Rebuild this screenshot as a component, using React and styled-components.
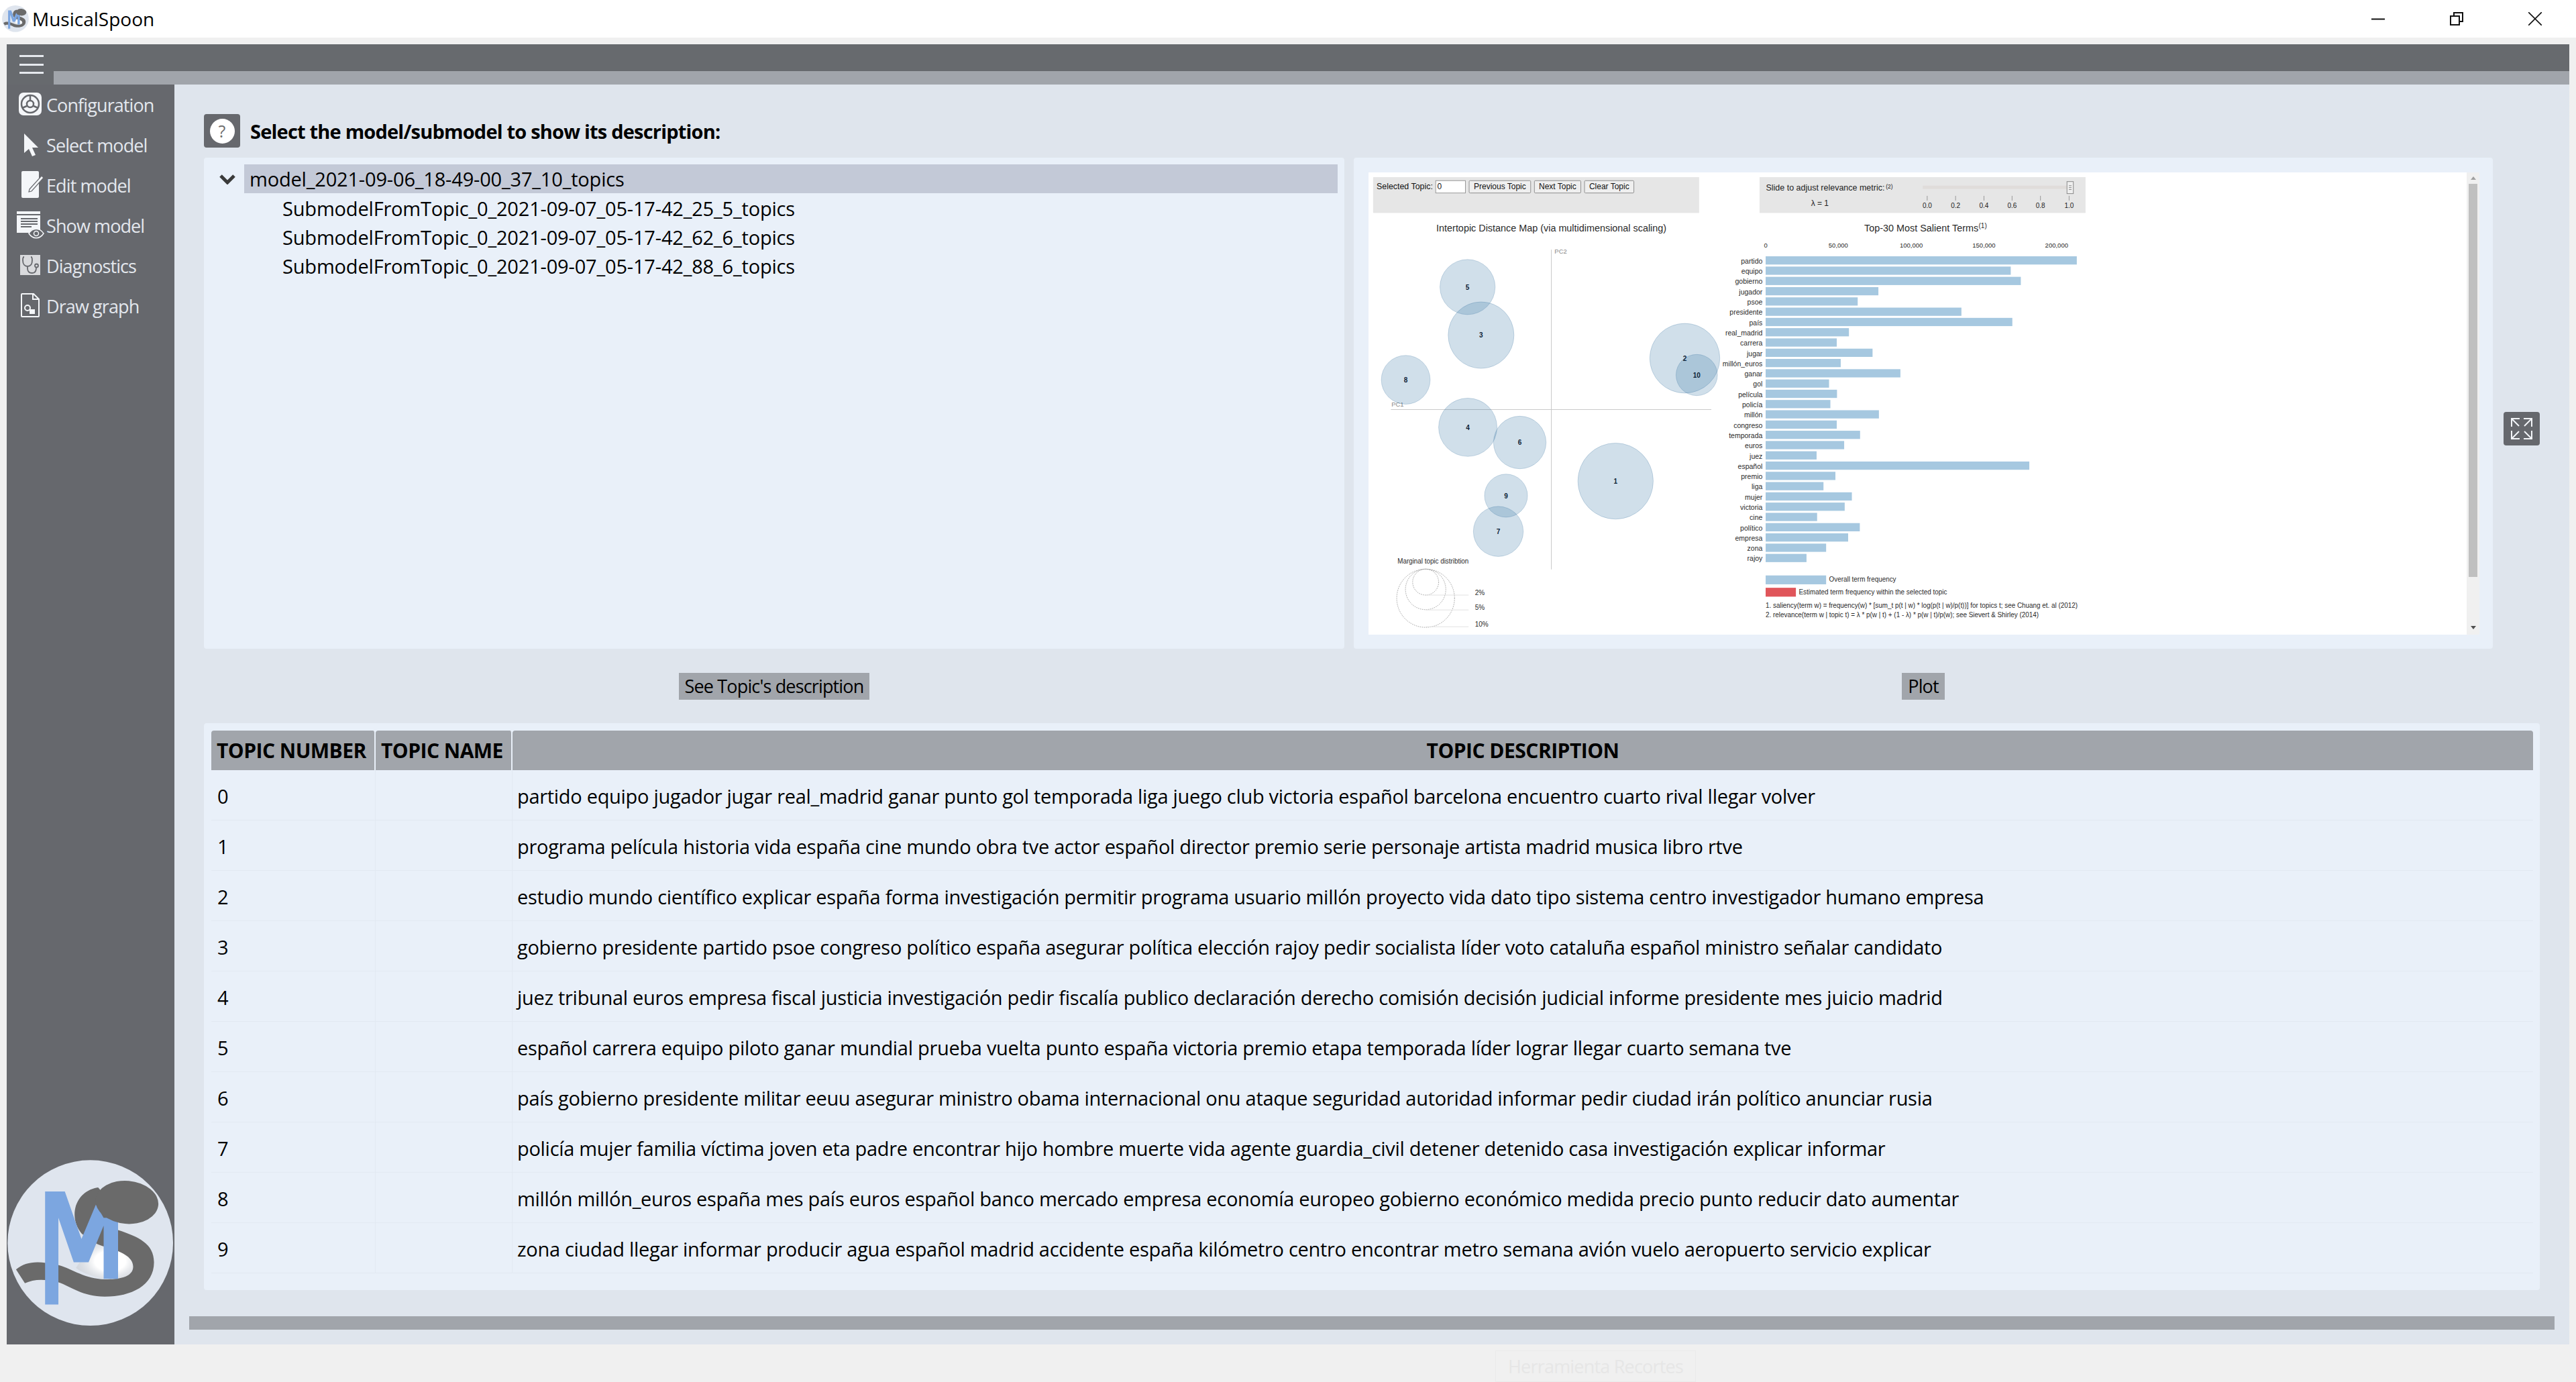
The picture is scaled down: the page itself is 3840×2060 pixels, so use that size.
import React from 'react';
import styled, { createGlobalStyle } from 'styled-components';

const UI = `"Open Sans", "Noto Sans", "Liberation Sans", sans-serif`;

const Global = createGlobalStyle`
  html, body { margin: 0; padding: 0; background: #f0f0f0; }
  * { box-sizing: border-box; }
  body { font-family: ${UI}; color: #000; }
`;

const Page = styled.div`width: 3840px; height: 2060px; display: flex; flex-direction: column; overflow: hidden; background: #f0f0f0;`;
const TitleBar = styled.header`height: 56px; background: #fff; display: flex; align-items: center; padding-left: 3px; flex: none;`;
const TitleText = styled.span`font-size: 28px; margin-left: 5px;`;
const WinControls = styled.div`margin-left: auto; display: flex; margin-right: 51px; gap: 97px;`;
const Shell = styled.div`margin: 10px 10px 0; width: 3820px; height: 1938px; display: flex; flex-direction: column; flex: none;`;
const TopBar = styled.div`height: 60px; background: #676a6e; display: flex; flex: none;`;
const MenuButton = styled.div`width: 70px; padding: 16px 0 0 19px; display: flex; flex-direction: column; gap: 9.5px;`;
const MenuLine = styled.span`display: block; width: 36px; height: 3px; background: #e6e9ee;`;
const TopStrip = styled.div`flex: 1; height: 20px; margin-top: 40px; background: #a1a5ab;`;
const Body = styled.div`flex: 1; display: flex; min-height: 0;`;
const Sidebar = styled.nav`width: 250px; background: #66686d; display: flex; flex-direction: column; flex: none;`;
const NavItem = styled.div`height: 60px; display: flex; align-items: center; padding-left: 12px; gap: 3px; color: #e3e7ed; font-size: 27px; flex: none; letter-spacing: -0.9px;`;
const SideLogo = styled.div`margin-top: auto; margin-left: 1px; margin-bottom: 27px; line-height: 0;`;
const Main = styled.main`flex: 1; background: #dfe5ed; display: flex; flex-direction: column; min-width: 0;`;
const Content = styled.div`padding: 44px 44px 0; flex: none;`;
const HeadingRow = styled.div`display: flex; align-items: center; gap: 15px; height: 50px;`;
const HelpButton = styled.div`width: 54px; height: 50px; border-radius: 4px; background: #66686d; display: flex; align-items: center; justify-content: center;`;
const HelpDot = styled.span`width: 37px; height: 37px; border-radius: 50%; background: #fff; color: #6d6d6d; display: flex; align-items: center; justify-content: center; font-size: 25px; line-height: 1;`;
const Heading = styled.h1`margin: 0; font-size: 29px; font-weight: 700; letter-spacing: -0.8px;`;
const PanelRow = styled.div`display: flex; margin-top: 15px; gap: 14px; align-items: flex-start;`;
const TreePanel = styled.section`width: 1700px; height: 732px; background: #e9f0f9; border-radius: 4px; padding: 10px 10px 0 0;`;
const TreeRow = styled.div`height: 43px; display: flex; align-items: center; font-size: 29px; letter-spacing: -0.18px; padding-left: ${p => p.$indent}px; padding-top: 1px;`;
const Chevron = styled.span`width: 60px; display: flex; justify-content: center; padding-left: 9px; flex: none;`;
const Selected = styled.span`flex: 1; height: 43px; line-height: 43px; background: #c3c9d7; padding-left: 8px; margin-top: -1px;`;
const PlotPanel = styled.section`width: 1698px; height: 732px; background: #e9f0f9; border-radius: 4px; padding: 22px 20px 21px 22px; display: flex;`;
const PlotSurface = styled.div`width: 1637px; height: 689px; background: #fff; line-height: 0; flex: none;`;
const ScrollTrack = styled.div`width: 19px; height: 689px; padding-top: 17px; background: #f0f0f0; position: relative; flex: none; display: flex; flex-direction: column; align-items: center;`;
const ScrollThumb = styled.div`width: 13px; height: 586px; background: #c0c0c0;`;
const ScrollArrowDown = styled.span`position: absolute; bottom: 8px; left: 6px; width: 0; height: 0; border-left: 4px solid transparent; border-right: 4px solid transparent; border-top: 5px solid #505050;`;
const ScrollArrowUp = styled.span`position: absolute; top: 6px; left: 6px; width: 0; height: 0; border-left: 4px solid transparent; border-right: 4px solid transparent; border-bottom: 5px solid #a0a0a0;`;
const ExpandButton = styled.div`width: 54px; height: 50px; border-radius: 4px; background: #66686d; margin: 379px 0 0 2px; display: flex; align-items: center; justify-content: center; flex: none;`;
const ActionRow = styled.div`display: flex; gap: 14px; margin-top: 36px; height: 40px;`;
const ActionCell = styled.div`width: ${p => p.$w}px; display: flex; justify-content: center;`;
const ActionButton = styled.button`height: 40px; padding: 0 9px; border: 0; background: #a1a5ab; color: #000; font: 400 27px ${UI}; letter-spacing: -0.85px; line-height: 40px;`;
const TablePanel = styled.section`margin-top: 35px; width: 3482px; height: 845px; background: #e9f0f9; border-radius: 4px; padding: 11px 10px 0 11px;`;
const Table = styled.table`border-collapse: separate; border-spacing: 0; width: 3461px; table-layout: fixed;`;
const Th = styled.th`height: 59px; background: #a1a5ab; font-size: 30px; font-weight: 700; text-align: ${p => p.$center ? 'center' : 'left'}; padding: 0 8px; border-right: 2px solid #e9f0f9; border-radius: 4px 4px 0 0; letter-spacing: -0.52px; white-space: nowrap; &:last-child { border-right: 0; }`;
const Td = styled.td`height: 75px; font-size: 29px; padding: 3px 8px 0 ${p => p.$first ? 9 : 7}px; border-right: 1px solid #e2e9f2; border-bottom: 1px solid #e2e9f2; letter-spacing: -0.3px; white-space: nowrap; &:last-child { border-right: 0; }`;
const BottomStrip = styled.div`height: 20px; margin: 39px 22px 0; background: #a1a5ab; flex: none;`;
const Ghost = styled.div`position: absolute; left: 2229px; top: 2013px; width: 299px; height: 47px; border: 1px solid #eaeaea; color: #e6e6e6; font-size: 27px; display: flex; align-items: center; justify-content: center; letter-spacing: -0.8px;`;

const rows = [
  'partido equipo jugador jugar real_madrid ganar punto gol temporada liga juego club victoria español barcelona encuentro cuarto rival llegar volver',
  'programa película historia vida españa cine mundo obra tve actor español director premio serie personaje artista madrid musica libro rtve',
  'estudio mundo científico explicar españa forma investigación permitir programa usuario millón proyecto vida dato tipo sistema centro investigador humano empresa',
  'gobierno presidente partido psoe congreso político españa asegurar política elección rajoy pedir socialista líder voto cataluña español ministro señalar candidato',
  'juez tribunal euros empresa fiscal justicia investigación pedir fiscalía publico declaración derecho comisión decisión judicial informe presidente mes juicio madrid',
  'español carrera equipo piloto ganar mundial prueba vuelta punto españa victoria premio etapa temporada líder lograr llegar cuarto semana tve',
  'país gobierno presidente militar eeuu asegurar ministro obama internacional onu ataque seguridad autoridad informar pedir ciudad irán político anunciar rusia',
  'policía mujer familia víctima joven eta padre encontrar hijo hombre muerte vida agente guardia_civil detener detenido casa investigación explicar informar',
  'millón millón_euros españa mes país euros español banco mercado empresa economía europeo gobierno económico medida precio punto reducir dato aumentar',
  'zona ciudad llegar informar producir agua español madrid accidente españa kilómetro centro encontrar metro semana avión vuelo aeropuerto servicio explicar',
];

const terms = ['partido','equipo','gobierno','jugador','psoe','presidente','país','real_madrid','carrera','jugar','millón_euros','ganar','gol','película','policía','millón','congreso','temporada','euros','juez','español','premio','liga','mujer','victoria','cine','político','empresa','zona','rajoy'];
const termEnds = [1254,1005,1043,506,428,819,1011,395,349,484,364,589,320,350,325,508,349,437,377,273,1075,344,299,406,379,275,436,392,309,235];
const bubbles = [
  [5,424,398,104,87],[3,475,550,124,105],[8,191,691,92,77],[4,425,841,110,92],[6,621,889,99,83],
  [9,569,1057,81,68],[7,540,1170,94,79],[1,982,1011,142,120],[2,1243,623,132,110],[10,1288,676,78,65],
];

const SX = 2.529, SY = 2.119;
const lx = X => X / SX - 20;
const rx = X => X / SX + 560;
const ly = Y => Y / SY - 17;

const PlotText = styled.text`font-family: "Liberation Sans", Arial, sans-serif; font-size: ${p => p.$s || 10.5}px; fill: ${p => p.$c || '#2a2a2a'}; font-weight: ${p => p.$b ? 700 : 400};`;

const PlotButton = ({ x1, x2, label }) => (
  <g>
    <rect x={lx(x1)} y={ly(62)} width={(x2 - x1) / SX} height={39 / SY} rx="1.5" fill="#efefef" stroke="#8f8f8f" />
    <PlotText x={lx((x1 + x2) / 2)} y={ly(88)} textAnchor="middle" $s={12} $c="#111">{label}</PlotText>
  </g>
);

const LdaPlot = () => (
  <svg width="1637" height="689" viewBox="0 0 1637 689">
    <rect x={lx(68)} y={ly(51)} width={1229 / SX} height={113 / SY} fill="#e6e6e6" />
    <rect x={rx(58)} y={ly(51)} width={1229 / SX} height={113 / SY} fill="#e6e6e6" />
    <PlotText x={lx(81)} y={ly(90)} $s={12.4} $c="#111">Selected Topic:</PlotText>
    <rect x={lx(304)} y={ly(62)} width={112 / SX} height={39 / SY} fill="#fff" stroke="#999" />
    <PlotText x={lx(310)} y={ly(88)} $s={12} $c="#111">0</PlotText>
    <PlotButton x1={430} x2={662} label="Previous Topic" />
    <PlotButton x1={676} x2={851} label="Next Topic" />
    <PlotButton x1={865} x2={1051} label="Clear Topic" />

    <PlotText x={lx(740)} y={ly(223)} textAnchor="middle" $s={14} textLength={343} lengthAdjust="spacingAndGlyphs">Intertopic Distance Map (via multidimensional scaling)</PlotText>
    <line x1={lx(740)} x2={lx(740)} y1={ly(280)} y2={ly(1290)} stroke="#c8c8c8" />
    <line x1={lx(135)} x2={lx(1343)} y1={ly(785)} y2={ly(785)} stroke="#c8c8c8" />
    <PlotText x={lx(752)} y={ly(292)} $s={9.5} $c="#8a8a8a">PC2</PlotText>
    <PlotText x={lx(137)} y={ly(775)} $s={9.5} $c="#8a8a8a">PC1</PlotText>

    {bubbles.map(([n, cx, cy, a, b]) => (
      <ellipse key={n} cx={lx(cx)} cy={ly(cy)} rx={a / SX} ry={b / SY} fill="#2a6f9e" fillOpacity="0.22" stroke="#1f5f90" strokeOpacity="0.22" />
    ))}
    {bubbles.map(([n, cx, cy]) => (
      <PlotText key={n} x={lx(cx)} y={ly(cy + 8)} textAnchor="middle" $s={10} $b $c="#0c2236">{n}</PlotText>
    ))}

    <PlotText x={lx(160)} y={ly(1271)} $s={10} textLength={106} lengthAdjust="spacingAndGlyphs">Marginal topic distribtion</PlotText>
    {[[1381, 109, 92], [1353, 76, 64], [1330, 49, 41]].map(([cy, a, b]) => (
      <ellipse key={cy} cx={lx(266)} cy={ly(cy)} rx={a / SX} ry={b / SY} fill="none" stroke="#9a9a9a" strokeDasharray="1.5 1.5" />
    ))}
    {[[1371, '2%'], [1418, '5%'], [1471, '10%']].map(([y, t]) => (
      <g key={t}>
        <line x1={lx(266)} x2={lx(428)} y1={ly(y)} y2={ly(y)} stroke="#e2e2e2" />
        <PlotText x={lx(452)} y={ly(y - 1)} $s={10}>{t}</PlotText>
      </g>
    ))}

    <PlotText x={rx(82)} y={ly(94)} $s={12} $c="#222" textLength={177} lengthAdjust="spacingAndGlyphs">Slide to adjust relevance metric:</PlotText>
    <PlotText x={rx(534)} y={ly(87)} $s={8.5} $c="#222">(2)</PlotText>
    <PlotText x={rx(252)} y={ly(142)} $s={12} $c="#222">λ = 1</PlotText>
    <rect x={rx(673)} y={ly(78)} width={552 / SX} height={10 / SY} fill="#e0dcda" />
    <rect x={rx(1217)} y={ly(65)} width={24 / SX} height={38 / SY} fill="#efefef" stroke="#8a8a8a" />
    <path d={`M${rx(1224)} ${ly(78)}h4M${rx(1224)} ${ly(84)}h4M${rx(1224)} ${ly(90)}h4`} stroke="#8a8a8a" />
    {[[690, '0.0'], [797, '0.2'], [904, '0.4'], [1010, '0.6'], [1117, '0.8'], [1225, '1.0']].map(([x, t]) => (
      <g key={t}>
        <line x1={rx(x)} x2={rx(x)} y1={ly(110)} y2={ly(125)} stroke="#999" />
        <PlotText x={rx(x)} y={ly(148)} textAnchor="middle" $s={10} $c="#222">{t}</PlotText>
      </g>
    ))}

    <PlotText x={rx(453)} y={ly(223)} $s={14} textLength={170} lengthAdjust="spacingAndGlyphs">Top-30 Most Salient Terms</PlotText>
    <PlotText x={rx(884)} y={ly(211)} $s={10}>(1)</PlotText>
    {[[81, '0'], [355, '50,000'], [630, '100,000'], [904, '150,000'], [1178, '200,000']].map(([x, t]) => (
      <PlotText key={t} x={rx(x)} y={ly(273)} textAnchor="middle" $s={9.5}>{t}</PlotText>
    ))}
    {terms.map((t, i) => {
      const top = 301 + i * 32.41;
      return (
        <g key={t}>
          <PlotText x={lx(1536)} y={ly(top + 23)} textAnchor="end" $s={10.5}>{t}</PlotText>
          <rect x={rx(81)} y={ly(top)} width={(termEnds[i] - 81) / SX} height={26 / SY} fill="#a6c8e0" />
        </g>
      );
    })}
    <rect x={rx(81)} y={ly(1309)} width={228 / SX} height={28 / SY} fill="#a6c8e0" />
    <rect x={rx(81)} y={ly(1348)} width={114 / SX} height={28 / SY} fill="#e0555a" />
    <PlotText x={rx(320)} y={ly(1329)} $s={10} textLength={100} lengthAdjust="spacingAndGlyphs">Overall term frequency</PlotText>
    <PlotText x={rx(206)} y={ly(1368)} $s={10} textLength={221} lengthAdjust="spacingAndGlyphs">Estimated term frequency within the selected topic</PlotText>
    <PlotText x={rx(81)} y={ly(1412)} $s={10} textLength={465} lengthAdjust="spacingAndGlyphs">1. saliency(term w) = frequency(w) * [sum_t p(t | w) * log(p(t | w)/p(t))] for topics t; see Chuang et. al (2012)</PlotText>
    <PlotText x={rx(81)} y={ly(1440)} $s={10} textLength={407} lengthAdjust="spacingAndGlyphs">2. relevance(term w | topic t) = λ * p(w | t) + (1 - λ) * p(w | t)/p(w); see Sievert &amp; Shirley (2014)</PlotText>
  </svg>
);

const Logo = ({ size, id }) => (
  <svg width={size} height={size} viewBox="31 84 750 750">
    <defs>
      <radialGradient id={id} cx="0.6" cy="0.5" r="0.6">
        <stop offset="0.45" stopColor="#ffffff" />
        <stop offset="1" stopColor="#c9ccd1" stopOpacity="0.5" />
      </radialGradient>
    </defs>
    <circle cx="405" cy="458" r="373" fill="#dfe5ee" />
    <path d="M420 455 C500 480 600 500 598 565 C590 625 520 630 460 620 C420 610 360 590 340 570 Z" fill={`url(#${id})`} />
    <path d="M70 578 C105 548 150 540 205 548 L262 558 C330 578 380 620 470 622 C540 624 598 610 598 565 C598 520 540 495 480 478 C420 462 395 440 365 415 C340 385 325 340 340 290 C360 235 400 215 440 208 L520 300 L530 400 C620 430 692 460 692 545 C692 650 590 700 470 700 C370 700 320 655 260 635 C200 620 150 620 110 640 Z" fill="#6a6a6a" />
    <path d="M201 226H290L365 440 430 285 465 345H530V620H465V380L397 545H330L261 345V736H201Z" fill="#7ca6e0" />
    <ellipse cx="570" cy="275" rx="142" ry="97" transform="rotate(5 570 275)" fill="#6a6a6a" />
  </svg>
);

const Icons = {
  config: (
    <svg width="44" height="44" viewBox="0 0 44 44">
      <rect x="6" y="4" width="34" height="34" rx="7" fill="#f4f6f9" />
      <circle cx="23" cy="21" r="13" fill="none" stroke="#66686d" strokeWidth="2.5" />
      <circle cx="23" cy="21" r="5" fill="none" stroke="#66686d" strokeWidth="2.5" />
      <path d="M23 8v8M11 27l7-3M35 27l-7-3" stroke="#66686d" strokeWidth="2.5" />
    </svg>
  ),
  select: (
    <svg width="44" height="44" viewBox="0 0 44 44">
      <path d="M14 5 35 26 26 26 31 37 26 39 21 28 14 34Z" fill="#f4f6f9" />
    </svg>
  ),
  edit: (
    <svg width="44" height="44" viewBox="0 0 44 44">
      <rect x="10" y="1" width="26" height="40" rx="2" fill="#f4f6f9" />
      <path d="M22 28 40 8l3 3-18 20-4 1z" fill="#f4f6f9" stroke="#66686d" strokeWidth="1.2" />
    </svg>
  ),
  show: (
    <svg width="44" height="44" viewBox="0 0 44 44">
      <path d="M3 1h35v4H3zM3 7h35v21H26l-4 5H3z" fill="#f4f6f9" />
      <path d="M9 12h25M9 16h25M9 20h25M9 24h16" stroke="#66686d" strokeWidth="2" />
      <path d="M21 34c6-9 16-9 22 0-6 9-16 9-22 0z" fill="#66686d" stroke="#f4f6f9" strokeWidth="1.5" />
      <circle cx="32" cy="34" r="3.5" fill="none" stroke="#f4f6f9" strokeWidth="1.5" />
    </svg>
  ),
  diag: (
    <svg width="44" height="44" viewBox="0 0 44 44">
      <rect x="8" y="6" width="30" height="30" fill="#d9dadd" />
      <path d="M14 9c-2 0-2 2-2 5 0 6 3 9 7 9s7-3 7-9c0-3 0-5-2-5M19 23v3c0 5 3 7 7 7s6-3 6-8" fill="none" stroke="#66686d" strokeWidth="1.8" />
      <circle cx="32.500" cy="22" r="2.5" fill="none" stroke="#66686d" strokeWidth="1.8" />
    </svg>
  ),
  draw: (
    <svg width="44" height="44" viewBox="0 0 44 44">
      <path d="M11 4h17l8 8v25a1 1 0 0 1-1 1H11a1 1 0 0 1-1-1V5a1 1 0 0 1 1-1zM27 4v8h9" fill="none" stroke="#f4f6f9" strokeWidth="2" />
      <circle cx="19" cy="25" r="4" fill="none" stroke="#f4f6f9" strokeWidth="2" />
      <rect x="22" y="27" width="8" height="7" fill="#f4f6f9" />
    </svg>
  ),
};

const navItems = [
  ['config', 'Configuration'], ['select', 'Select model'], ['edit', 'Edit model'],
  ['show', 'Show model'], ['diag', 'Diagnostics'], ['draw', 'Draw graph'],
];

const submodels = ['25_5', '62_6', '88_6'];

export default function App() {
  return (
    <Page>
      <Global />
      <TitleBar>
        <Logo size={40} id="logoSmall" />
        <TitleText>MusicalSpoon</TitleText>
        <WinControls>
          <svg width="20" height="20" viewBox="0 0 20 20"><path d="M0 10.500h20" stroke="#111" strokeWidth="2" /></svg>
          <svg width="20" height="20" viewBox="0 0 20 20"><path d="M1 6h13v13H1zM6 5V1h13v13h-4" fill="none" stroke="#111" strokeWidth="2" /></svg>
          <svg width="20" height="20" viewBox="0 0 20 20"><path d="M0 0l20 20M20 0L0 20" stroke="#111" strokeWidth="1.6" /></svg>
        </WinControls>
      </TitleBar>
      <Shell>
        <TopBar>
          <MenuButton><MenuLine /><MenuLine /><MenuLine /></MenuButton>
          <TopStrip />
        </TopBar>
        <Body>
          <Sidebar>
            {navItems.map(([k, label]) => (
              <NavItem key={k}>{Icons[k]}<span>{label}</span></NavItem>
            ))}
            <SideLogo><Logo size={248} id="logoLarge" /></SideLogo>
          </Sidebar>
          <Main>
            <Content>
              <HeadingRow>
                <HelpButton><HelpDot>?</HelpDot></HelpButton>
                <Heading>Select the model/submodel to show its description:</Heading>
              </HeadingRow>
              <PanelRow>
                <TreePanel>
                  <TreeRow $indent={0}>
                    <Chevron>
                      <svg width="24" height="16" viewBox="0 0 24 16"><path d="M2 3l10 10L22 3" fill="none" stroke="#3a3a3a" strokeWidth="5" /></svg>
                    </Chevron>
                    <Selected>model_2021-09-06_18-49-00_37_10_topics</Selected>
                  </TreeRow>
                  {submodels.map(s => (
                    <TreeRow key={s} $indent={117}>SubmodelFromTopic_0_2021-09-07_05-17-42_{s}_topics</TreeRow>
                  ))}
                </TreePanel>
                <PlotPanel>
                  <PlotSurface><LdaPlot /></PlotSurface>
                  <ScrollTrack><ScrollArrowUp /><ScrollThumb /><ScrollArrowDown /></ScrollTrack>
                </PlotPanel>
                <ExpandButton>
                  <svg width="34" height="34" viewBox="0 0 34 34">
                    <path d="M2 14V2h12M2 2l11 11M32 14V2H20M32 2L21 13M2 20v12h12M2 32l11-11M32 20v12H20M32 32L21 21" fill="none" stroke="#f2f4f7" strokeWidth="2" />
                  </svg>
                </ExpandButton>
              </PanelRow>
              <ActionRow>
                <ActionCell $w={1700}><ActionButton>See Topic's description</ActionButton></ActionCell>
                <ActionCell $w={1698}><ActionButton>Plot</ActionButton></ActionCell>
              </ActionRow>
              <TablePanel>
                <Table>
                  <colgroup><col width="245" /><col width="204" /><col /></colgroup>
                  <thead>
                    <tr><Th>TOPIC NUMBER</Th><Th>TOPIC NAME</Th><Th $center>TOPIC DESCRIPTION</Th></tr>
                  </thead>
                  <tbody>
                    {rows.map((r, i) => (
                      <tr key={i}><Td $first>{i}</Td><Td /><Td>{r}</Td></tr>
                    ))}
                  </tbody>
                </Table>
              </TablePanel>
            </Content>
            <BottomStrip />
          </Main>
        </Body>
      </Shell>
      <Ghost>Herramienta Recortes</Ghost>
    </Page>
  );
}
